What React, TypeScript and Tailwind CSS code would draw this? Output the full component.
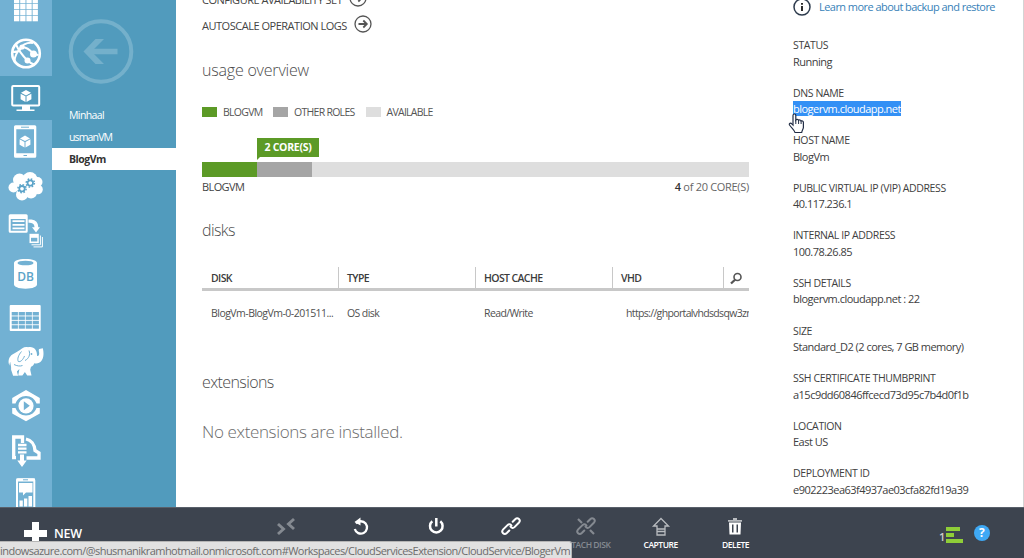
import type { ReactNode } from "react";

const RAIL = "#72b1d3";

function Cube({ x, y }: { x: number; y: number }) {
  return (
    <g transform={`translate(${x} ${y})`}>
      <path d="M0-6 5-3.2 0-.6-5-3.2Z" fill="#fff" />
      <path d="M-5.4-2.3-.5.3V6L-5.4 3.2Z" fill="#fff" />
      <path d="M5.4-2.3.5.3V6L5.4 3.2Z" fill="#fff" />
    </g>
  );
}

function Gear({ x, y, r }: { x: number; y: number; r: number }) {
  return (
    <g transform={`translate(${x} ${y})`} stroke="#5ba3c8" fill="none">
      <circle r={r} strokeWidth="1.8" />
      <circle r={r + 1.4} strokeWidth="1.5" strokeDasharray={`${(2 * Math.PI * (r + 1.4)) / 16}`} />
    </g>
  );
}

const railIcons: { id: string; selected?: boolean; art: ReactNode }[] = [
  {
    id: "all",
    art: [10, 16, 22, 28].map((y) =>
      [14, 20.2, 26.4, 32.6].map((x) => <rect key={`${x}-${y}`} x={x} y={y} width="5.3" height="5.3" fill="#fff" />),
    ),
  },
  {
    id: "web",
    art: (
      <g fill="none" stroke="#fff" strokeWidth="2">
        <circle cx="26" cy="21.500" r="13.800" strokeWidth="2.600" />
        <path d="M16 12.500C18 17 22 23 27 28c3 3 5 4 8 5M33 11c-6-1-12 2-15 8-3 5-4 9-3 12M22 15c5 0 9 4 11.500 7l5 1M13 20l6-1 3-4" />
        <circle cx="33.500" cy="22" r="2.500" fill="#fff" />
        <circle cx="27.500" cy="28.500" r="2" fill="#fff" />
        <circle cx="22" cy="15" r="1.600" fill="#fff" />
      </g>
    ),
  },
  {
    id: "vm",
    selected: true,
    art: (
      <g>
        <rect x="12.200" y="10" width="27" height="19.500" rx="1" fill="none" stroke="#fff" strokeWidth="2" />
        <path d="M22 30h8v3.500h4.500V35h-18v-1.500H22Z" fill="#fff" />
        <Cube x={26} y={20} />
      </g>
    ),
  },
  {
    id: "mobile",
    art: (
      <g>
        <path fillRule="evenodd" fill="#fff" d="M15.500 5.300h19.300q1.500 0 1.500 1.500v29.400q0 1.500-1.500 1.500H15.500q-1.500 0-1.500-1.500V6.800q0-1.500 1.500-1.500ZM16.300 9.300v24h17.700v-24Z" />
        <path d="M21 7.200h8M23.500 35.500h3.500" stroke={RAIL} strokeWidth="1" />
        <Cube x={25} y={21.600} />
      </g>
    ),
  },
  {
    id: "cloud",
    art: (
      <g>
        <g fill="#fff">
          <circle cx="30" cy="15.500" r="7.500" />
          <circle cx="19.500" cy="16" r="6.500" />
          <circle cx="13.500" cy="23.500" r="5" />
          <circle cx="37.500" cy="18" r="5" />
          <circle cx="38" cy="25.500" r="4.800" />
          <circle cx="22" cy="30.500" r="6" />
          <circle cx="31" cy="28.500" r="6" />
          <path d="M14 17h24v10H14Z" />
        </g>
        <Gear x={22} y={24.700} r={2.700} />
        <Gear x={30.300} y={19} r={2.700} />
      </g>
    ),
  },
  {
    id: "queue",
    art: (
      <g>
        <rect x="9.700" y="7.300" width="17" height="16.500" rx=".5" fill="none" stroke="#fff" strokeWidth="2" />
        <path d="M9 9.500h18" stroke="#fff" strokeWidth="3" />
        <path d="M12.500 13.200h12M12.500 16.800h12M12.500 20.400h12" stroke="#fff" strokeWidth="1.800" />
        <path d="M28.500 11.500h3q6.500.5 6.800 7.700H40l-4 5.300-4-5.300h2.500c-.2-3.500-2-4.500-6-4.500Z" fill="#fff" />
        <path d="M29.500 25.800h9.300v9.300h-9.300Z" fill="#fff" />
        <path d="M31 29.800h6.300v3.700H31Z" fill={RAIL} />
        <path d="M31.500 36.800h8.900v-9.300M33.500 38.900h8.900V29" fill="none" stroke="#fff" strokeWidth="1" />
      </g>
    ),
  },
  {
    id: "db",
    art: (
      <g>
        <path d="M14 11c0-2 4-4 11.500-4S37 9 37 11v21.500c0 2-4 4.200-11.500 4.200S14 34.500 14 32.500Z" fill="#fff" />
        <ellipse cx="25.500" cy="11" rx="8" ry="2.300" fill={RAIL} />
        <text x="25.500" y="28.500" textAnchor="middle" fontSize="12" fontWeight="600" fill="#5ba3c8">DB</text>
      </g>
    ),
  },
  {
    id: "tables",
    art: (
      <g>
        <rect x="9.700" y="9" width="31" height="26" rx="1" fill="#fff" />
        {[16, 20.400, 24.800, 29.200].map((y) =>
          [11.700, 18.700, 25.700, 32.700].map((x) => <rect key={`${x}-${y}`} x={x} y={y} width="6.200" height="3.500" fill={RAIL} />),
        )}
      </g>
    ),
  },
  {
    id: "hadoop",
    art: (
      <g>
        <path
          fill="#fff"
          d="M22 8.500c2-1.300 4-1.700 6-1.200 3-.8 6 .2 7.500 2.500 1.300 2 1.500 4 1.500 6 1.300.8 2.300-.8 2.200-2.500-.1-2-1-3.500 0-4.300l3.600-.8c1.200 4.500 1 9.500-1.300 12.500-1.800 2.300-4.500 3.300-7.200 2.500-.6 1.800-1.700 3-3.300 3.500l-.8 3 1.300 5.800h-4.300l-2.300-3.500-2.500 3.500h-4.200l1.200-6.500-2.500 2.500 1.200 4.300h-5l-2-6c.3-3.500-.7-5.500-.9-8-.8 1.500-.7 3 0 4.500l-1.500-2.800c-.6-4.500 1.300-8 5-9.700 3-1.500 5.500-3.300 8.300-5.300Z"
        />
        <path d="M21.500 11.500c-3 3.500-4.500 7.500-3.200 10 2.200.8 4.700-1.700 6.200-5.500M29 10.500c1.500 4 0 8-4 10M14 24.500c3 1.500 6 2 8.500 1" fill="none" stroke={RAIL} strokeWidth="1" />
        <circle cx="31.500" cy="14" r=".9" fill={RAIL} />
      </g>
    ),
  },
  {
    id: "media",
    art: (
      <g>
        <path d="M12.200 19.500V14L26 6l13.800 8v5.500h-3.300C35 15 31 12 26 12s-9 3-10.500 7.500ZM12.200 24v5.500L26 37.300l13.800-7.800V24h-3.300C35 28.500 31 31.500 26 31.500S17 28.500 15.500 24Z" fill="#fff" />
        <circle cx="26" cy="21.800" r="7.600" fill="#fff" />
        <path d="M23.800 17.300v9l6-4.500Z" fill={RAIL} />
      </g>
    ),
  },
  {
    id: "import",
    art: (
      <g>
        <path d="M16 29.700h-2.300V9h8.800v6M26.500 30H39v-5l-4-2.500c-.5-6-4-10.500-9-11.500" fill="none" stroke="#fff" strokeWidth="3.300" />
        <path d="M18 17h8.500M18 20.700h8.500M18 24.400h8.500" stroke="#fff" strokeWidth="2.300" />
        <path d="M20 26.500h4v6h2.700L22 39l-4.700-6.500H20Z" fill="#fff" />
      </g>
    ),
  },
  {
    id: "engagement",
    art: (
      <g>
        <rect x="17" y="7.300" width="17.300" height="32" rx="1" fill="none" stroke="#fff" strokeWidth="2" />
        <path d="M16.500 8h18.500" stroke="#fff" strokeWidth="3" />
        <path d="M23 7.800h5" stroke={RAIL} strokeWidth="1" />
        <path d="M19 11h13.500v9.500h-6.500l-3 3v-3h-4ZM19.500 28.500h3.300v6h-3.300ZM24 26.500h3.300v8H24ZM28.500 24h3.500v10.500h-3.500Z" fill="#fff" />
      </g>
    ),
  },
];

function LinkRow({ label }: { label: string }) {
  return (
    <div className="flex h-[26px] items-center gap-[7px] text-[11px] leading-4 text-[#444]">
      <span className="tracking-[-0.48px]">{label}</span>
      <svg className="-mt-1" width="18" height="18" viewBox="0 0 18 18" fill="none" stroke="#555">
        <circle cx="9" cy="9" r="8" strokeWidth="1.300" />
        <path d="M4.500 9h8M9.300 5.500 12.800 9l-3.500 3.500" strokeWidth="1.800" />
      </svg>
    </div>
  );
}

const details = [
  ["STATUS", "Running"],
  ["DNS NAME", "blogervm.cloudapp.net"],
  ["HOST NAME", "BlogVm"],
  ["PUBLIC VIRTUAL IP (VIP) ADDRESS", "40.117.236.1"],
  ["INTERNAL IP ADDRESS", "100.78.26.85"],
  ["SSH DETAILS", "blogervm.cloudapp.net : 22"],
  ["SIZE", "Standard_D2 (2 cores, 7 GB memory)"],
  ["SSH CERTIFICATE THUMBPRINT", "a15c9dd60846ffcecd73d95c7b4d0f1b"],
  ["LOCATION", "East US"],
  ["DEPLOYMENT ID", "e902223ea63f4937ae03cfa82fd19a39"],
];

const chain = (
  <g fill="none" strokeWidth="2" strokeLinecap="round">
    <path d="M9.500 9.500c1 1.800 2.800 1.800 4 .600l4.300-4.300c2.600-2.800-1-6-3.600-3.600l-2.500 2.500" />
    <path d="M10.500 8.700c-1-1.800-2.800-1.800-4-.6l-4.300 4.300c-2.600 2.800 1 6 3.600 3.600l2.500-2.500" />
  </g>
);

const commands: { id: string; label?: string; dim?: boolean; art: ReactNode }[] = [
  { id: "connect", dim: true, art: <path d="m2 7 5.500 5L2 17M18 2l-5.500 5 5.500 5" fill="none" strokeWidth="2.900" /> },
  {
    id: "restart",
    art: (
      <g>
        <path d="M5 6.500a6.200 6.200 0 1 1-1.200 5.500" fill="none" strokeWidth="2.300" />
        <path d="M9.500.500v8L3.500 5Z" stroke="none" fill="#fff" />
      </g>
    ),
  },
  { id: "power", art: <path d="M6.300 4.300a6.300 6.300 0 1 0 8 0M10.300 1v8.500" fill="none" strokeWidth="2.500" /> },
  { id: "attach", art: chain },
  {
    id: "detach",
    label: "DETACH DISK",
    dim: true,
    art: (
      <g>
        {chain}
        <path d="m2 2 4 4M14 13l4 4" strokeWidth="2.200" />
      </g>
    ),
  },
  { id: "capture", label: "CAPTURE", art: <path d="M10 1.500 17.500 9H14v9H6V9H2.500ZM6 12h8M6 14.500h8" fill="none" stroke="#b9bcc0" strokeWidth="1.300" /> },
  {
    id: "delete",
    label: "DELETE",
    art: (
      <g stroke="none">
        <path d="M3 3h14v1.800H3ZM8 1h4v2H8Z" fill="#b9bcc0" />
        <path fillRule="evenodd" d="M4 5.500h12l-.5 12H4.500ZM7 7.500v8h1.500v-8ZM11.500 7.500v8H13v-8Z" fill="#fff" />
      </g>
    ),
  },
];

export default function App() {
  return (
    <div className="relative flex h-[558px] w-[1024px] flex-col overflow-hidden bg-white font-['Open_Sans','Noto_Sans',sans-serif]">
      <div className="flex h-[507px] overflow-hidden">
        <nav className="w-[52px] shrink-0 bg-[#72b1d3]">
          <div className="-mt-3 flex flex-col">
            {railIcons.map((icon) => (
              <div key={icon.id} className={icon.selected ? "h-11 bg-[#519bbd]" : "h-11"}>
                <svg width="52" height="44" viewBox="0 0 52 44">{icon.art}</svg>
              </div>
            ))}
          </div>
        </nav>

        <div className="w-[124px] shrink-0 bg-[#519bbd] pt-[18px]">
          <svg className="ml-4" width="66" height="66" viewBox="0 0 66 66" fill="none" stroke="#74b0cb">
            <circle cx="33" cy="33.500" r="30.300" strokeWidth="4" />
            <path d="M49.500 33.500H21" strokeWidth="5.500" />
            <path d="M27.500 21H36L23.500 33.500 36 46h-8.500L15.500 33.500Z" fill="#74b0cb" stroke="none" />
          </svg>
          <ul className="mt-5 text-[10.500px] leading-[22px] text-white">
            <li className="h-[22px] pl-[17px] tracking-[-0.600px]">Minhaal</li>
            <li className="h-[22px] pl-[17px] tracking-[-0.850px]">usmanVM</li>
            <li className="h-[22px] bg-white pl-[17px] font-bold tracking-[-0.500px] text-[#333]">BlogVm</li>
          </ul>
        </div>

        <main className="ml-[26px] w-[547px] shrink-0">
          <div className="-mt-[13px]">
            <LinkRow label="CONFIGURE AVAILABILITY SET" />
            <LinkRow label="AUTOSCALE OPERATION LOGS" />
          </div>
          <h2 className="mt-[19px] text-[16px] leading-6 font-light tracking-[-0.200px] text-[#4c4c4c]">usage overview</h2>

          <div className="mt-[22px] flex h-4 items-center text-[10.500px] leading-4 tracking-[-0.720px] text-[#555]">
            <span className="mr-1.5 h-2.5 w-[15px] bg-[#5c9a26]" />
            <span className="w-[50px]">BLOGVM</span>
            <span className="mr-1.5 h-2.5 w-[15px] bg-[#a5a5a5]" />
            <span className="w-[71.500px]">OTHER ROLES</span>
            <span className="mr-1.5 h-2.5 w-[15px] bg-[#dedede]" />
            <span>AVAILABLE</span>
          </div>

          <div className="mt-[18px] ml-[55px] h-6 w-[62px]">
            <div className="h-[19px] bg-[#5c9a26] text-center text-[10.500px] leading-[19px] font-bold tracking-[-0.300px] text-white">2 CORE(S)</div>
            <div className="h-0 w-0 border-t-[3px] border-r-[3px] border-t-[#5c9a26] border-r-transparent" />
          </div>
          <div className="flex h-[15px] bg-[#dedede]">
            <div className="w-[55px] bg-[#5c9a26]" />
            <div className="w-[55px] bg-[#a5a5a5]" />
          </div>
          <div className="mt-0.5 flex h-4 justify-between text-[11px] leading-4 text-[#444]">
            <span className="tracking-[-0.600px]">BLOGVM</span>
            <span className="tracking-[-0.300px] text-[#666]"><b className="font-semibold text-[#333]">4</b> of 20 CORE(S)</span>
          </div>

          <h2 className="mt-[23px] text-[16px] leading-6 font-light tracking-[-0.600px] text-[#4c4c4c]">disks</h2>

          <div className="mt-[25px] flex h-6 border-b-[3px] border-[#c8c8c8] text-[10.500px] leading-[22px] font-semibold tracking-[-0.620px] text-[#3c3c3c]">
            <div className="w-[137px] border-r border-[#c8c8c8] pl-[9px]">DISK</div>
            <div className="w-[137px] border-r border-[#c8c8c8] pl-2">TYPE</div>
            <div className="w-[137px] border-r border-[#c8c8c8] pl-2">HOST CACHE</div>
            <div className="w-[111px] border-r border-[#c8c8c8] pl-2">VHD</div>
            <svg className="mt-[5px] ml-1.5" width="13" height="13" viewBox="0 0 13 13" fill="none" stroke="#555">
              <circle cx="7.500" cy="5" r="3.500" strokeWidth="1.600" />
              <path d="M5.300 7.500 1 11.500" strokeWidth="2.300" />
            </svg>
          </div>
          <div className="mt-3.5 flex h-4 text-[10.500px] leading-4 tracking-[-0.600px] whitespace-nowrap text-[#505050]">
            <span className="w-[137px] pl-[9px] tracking-[-0.520px]">BlogVm-BlogVm-0-201511...</span>
            <span className="w-[137px] pl-2">OS disk</span>
            <span className="w-[137px] pl-2">Read/Write</span>
            <span className="w-[136px] overflow-hidden pl-[13px] tracking-[-0.650px]">https://ghportalvhdsdsqw3zr</span>
          </div>

          <h2 className="mt-[49px] text-[16px] leading-6 font-light tracking-[-0.600px] text-[#4c4c4c]">extensions</h2>
          <p className="mt-[26px] text-[17px] leading-6 font-light tracking-[-0.360px] text-[#6c6c6c]">No extensions are installed.</p>
        </main>

        <aside className="ml-11 w-[230px] shrink-0">
          <div className="-mt-[3px] flex h-5 items-center gap-2 text-[11px] text-[#3781b8]">
            <svg width="18" height="18" viewBox="0 0 18 18">
              <circle cx="9" cy="9" r="8" fill="none" stroke="#2d3b4d" strokeWidth="1.500" />
              <path d="M9 8v5M9 5v1.800" stroke="#222" strokeWidth="1.900" />
            </svg>
            <span className="tracking-[-0.550px] whitespace-nowrap">Learn more about backup and restore</span>
          </div>
          <dl className="mt-5 text-[11px] whitespace-nowrap text-[#404040]">
            {details.map(([label, value], i) => (
              <div key={label} className="h-[47.600px]">
                <dt className="h-4 text-[10.500px] leading-4 tracking-[-0.380px]">{label}</dt>
                <dd className="flex h-4 items-center leading-[15px] tracking-[-0.520px]">
                  <span className={i === 1 ? "bg-[#3390f5] text-white" : ""}>{value}</span>
                </dd>
              </div>
            ))}
          </dl>
        </aside>
        <div className="w-px shrink-0 bg-[#d4d4d4]" />
      </div>

      <footer className="flex h-[51px] border-t border-[#59606a] bg-[#3d444f] text-white">
        <div className="flex h-[51px] w-[249px] items-center gap-[7px] pl-6">
          <svg width="23" height="23" viewBox="0 0 23 23"><path d="M8 0h7v8h8v7h-8v8H8v-8H0V8h8Z" fill="#fff" /></svg>
          <span className="pt-0.5 text-[12.500px] font-semibold tracking-[-0.200px]">NEW</span>
        </div>
        {commands.map((c) => (
          <div key={c.id} className={c.dim ? "flex w-[74.850px] shrink-0 flex-col items-center pt-[9px] text-[#858a91]" : "flex w-[74.850px] shrink-0 flex-col items-center pt-[9px]"}>
            <svg width="20" height="20" viewBox="0 0 20 20" stroke={c.dim ? "#858a91" : "#fff"}>{c.art}</svg>
            <span className="text-[8.500px] leading-4 font-semibold tracking-[-0.450px]">{c.label}</span>
          </div>
        ))}
        <div className="mt-[19px] ml-[166px] flex h-4 shrink-0">
          <span className="w-1.5 pt-0.5 text-[11px] leading-4 font-semibold text-[#ccc]">1</span>
          <div className="flex w-[23px] flex-col gap-0.5">
            <div className="ml-px h-1 w-3.5 bg-[#8fce38]" />
            <div className="ml-px h-1 w-2 bg-[#8fce38]" />
            <div className="ml-px h-1 w-[17px] bg-[#8fce38]" />
          </div>
          <div className="-mt-0.5 ml-1.5 h-4 w-4 rounded-full bg-[#3fa9f5] text-center text-[12px] leading-4 font-bold">?</div>
        </div>
      </footer>

      <div className="absolute bottom-0 left-0 h-[17px] w-[572px] overflow-hidden rounded-tr-[3px] border-t border-r border-[#b5b5b5] bg-[#e1e1e1] text-[11px] leading-[17px] tracking-[-0.540px] whitespace-nowrap text-[#6c6c6c]">
        indowsazure.com/@shusmanikramhotmail.onmicrosoft.com#Workspaces/CloudServicesExtension/CloudService/BlogerVm
      </div>

      <svg className="absolute top-[113px] left-[788px]" width="17" height="21" viewBox="0 0 17 21">
        <path d="M5 12V2.500C5 .500 7.800.500 7.800 2.500V7c.6-1 2.500-.9 2.800.3.700-.7 2.200-.4 2.500.7.800-.5 2.300 0 2.300 1.500v5c0 1.500-1.500 3-1.700 5H7c-.5-2.500-3-4-5.500-7.500-.8-1.500 1.200-2.500 2.300-1.200Z" fill="#fff" stroke="#222d45" strokeWidth="1.200" />
        <path d="M7.800 7v4M10.600 7.500V11M13.100 8.200V11" stroke="#222d45" />
      </svg>
    </div>
  );
}
